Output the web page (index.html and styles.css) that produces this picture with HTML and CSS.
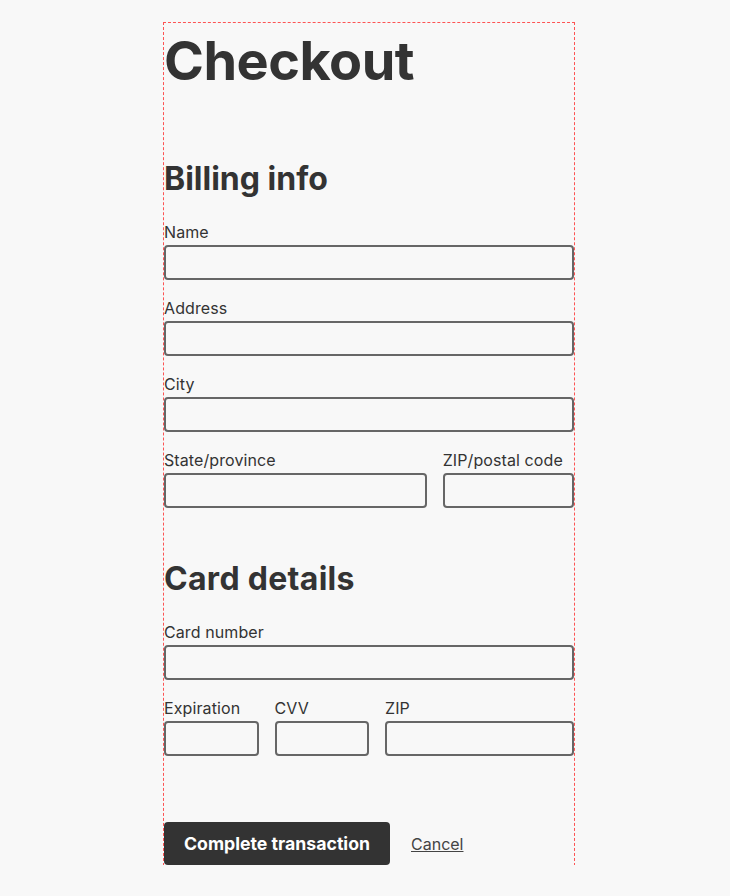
FILE: index.html
```html
<!DOCTYPE html>
<html lang="en">
<head>
<meta charset="utf-8">
<title>Checkout</title>
<link rel="stylesheet" href="styles.css">
</head>
<body>
<main class="checkout">
  <h1 class="title">Checkout</h1>
  <section class="section section-billing">
    <h2 class="section-title">Billing info</h2>
    <div class="field">
      <label class="label" for="name">Name</label>
      <input class="input" id="name" type="text">
    </div>
    <div class="field">
      <label class="label" for="address">Address</label>
      <input class="input" id="address" type="text">
    </div>
    <div class="field">
      <label class="label" for="city">City</label>
      <input class="input" id="city" type="text">
    </div>
    <div class="row row-state">
      <div class="field">
        <label class="label" for="state">State/province</label>
        <input class="input" id="state" type="text">
      </div>
      <div class="field">
        <label class="label" for="zip">ZIP/postal code</label>
        <input class="input" id="zip" type="text">
      </div>
    </div>
  </section>
  <section class="section section-card">
    <h2 class="section-title">Card details</h2>
    <div class="field">
      <label class="label" for="card">Card number</label>
      <input class="input" id="card" type="text">
    </div>
    <div class="row row-card">
      <div class="field">
        <label class="label" for="exp">Expiration</label>
        <input class="input" id="exp" type="text">
      </div>
      <div class="field">
        <label class="label" for="cvv">CVV</label>
        <input class="input" id="cvv" type="text">
      </div>
      <div class="field">
        <label class="label" for="czip">ZIP</label>
        <input class="input" id="czip" type="text">
      </div>
    </div>
  </section>
  <div class="actions">
    <button class="btn" type="button">Complete transaction</button>
    <a class="cancel" href="#">Cancel</a>
  </div>
</main>
</body>
</html>
```
FILE: styles.css
```css
* { box-sizing: border-box; }

html, body {
  margin: 0;
  padding: 0;
  background: #f8f8f8;
}

body {
  font-family: Inter, "Noto Sans", sans-serif;
  color: #333;
}

.checkout {
  display: flow-root;
  width: 410px;
  margin: 23px 0 0 164px;
  outline: 1px dashed rgba(255, 30, 30, 0.75);
}

.title {
  margin: 6px 0 0;
  font-size: 54px;
  font-weight: 700;
  line-height: 1.2;
  letter-spacing: -0.5px;
}

.section-billing { margin-top: 66.5px; }
.section-card { margin-top: 33px; }

.section-title {
  margin: 0 0 24.6px;
  font-size: 32px;
  font-weight: 700;
  line-height: 1.2;
}

.section-card .section-title { letter-spacing: 0.3px; }

.field {
  display: flex;
  flex-direction: column;
  margin-bottom: 19px;
  min-width: 0;
}

.label {
  font-size: 16px;
  line-height: 19px;
  margin-bottom: 3px;
  white-space: nowrap;
  letter-spacing: 0.1px;
}

.input {
  display: block;
  width: 100%;
  height: 35px;
  margin: 0;
  padding: 0 8px;
  border: 2px solid #666;
  border-radius: 4px;
  background: transparent;
  font: inherit;
}

.row {
  display: grid;
  column-gap: 16px;
}

.row-state { grid-template-columns: 2fr 1fr; }
.row-card { grid-template-columns: 1fr 1fr 2fr; }

.actions {
  display: flex;
  align-items: center;
  margin-top: 47px;
}

.btn {
  height: 43px;
  padding: 0 20px;
  border: 0;
  border-radius: 4px;
  background: #333;
  color: #fff;
  font-family: inherit;
  font-size: 17.7px;
  font-weight: 700;
}

.cancel {
  margin-left: 21px;
  color: #444;
  font-size: 16px;
  text-decoration: underline;
}
```
